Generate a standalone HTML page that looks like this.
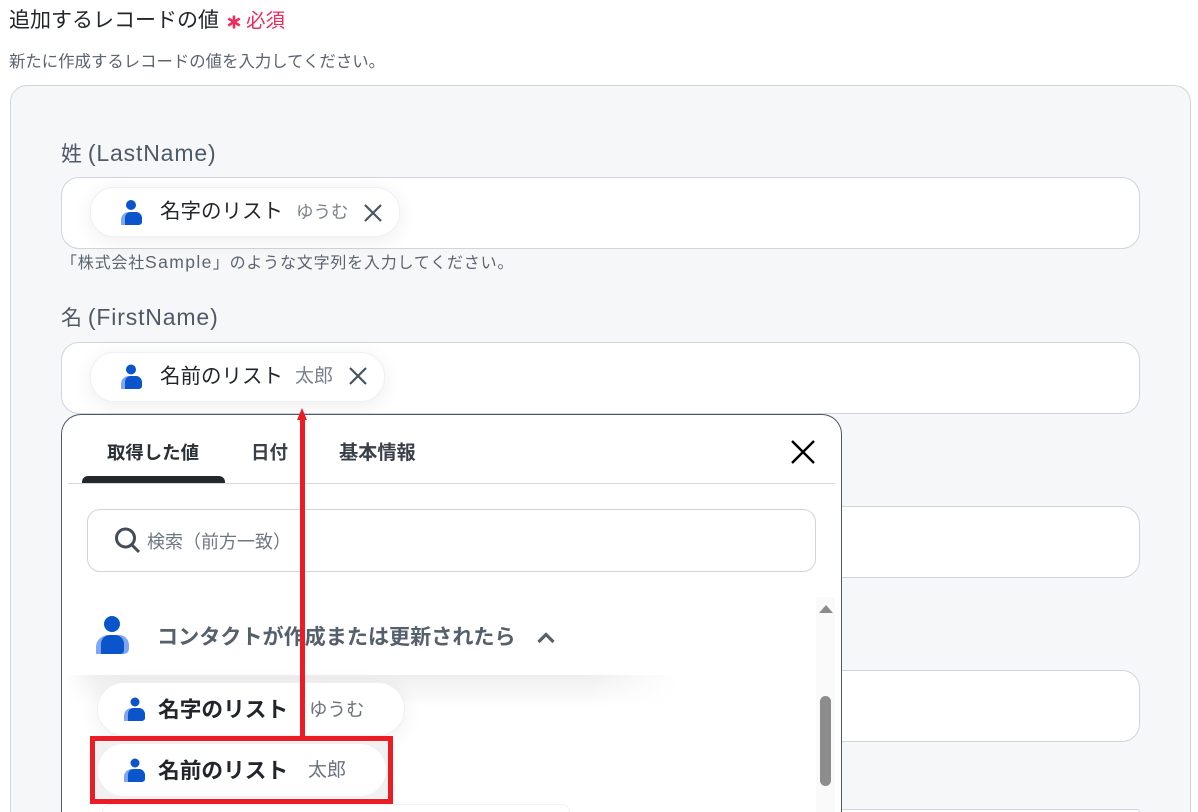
<!DOCTYPE html>
<html lang="ja"><head><meta charset="utf-8"><style>
*{box-sizing:border-box}
html,body{margin:0;padding:0;width:1198px;height:812px;overflow:hidden;background:#fff;font-family:"Liberation Sans","Noto Sans CJK JP",sans-serif}
#w{position:absolute;left:0;top:0;width:1198px;height:812px;overflow:hidden;background:#fff}
.a{position:absolute}
.t{position:absolute;white-space:nowrap;line-height:1}
.panel{left:10px;top:85px;width:1181px;height:727px;background:#f6f7f9;border:1px solid #cfd4df;border-bottom:0;border-radius:17px 17px 0 0}
.inp{left:61px;width:1079px;height:72px;background:#fff;border:1px solid #cfd4df;border-radius:18px}
.pill{position:absolute;background:#fff;border:1px solid #eef0f3;border-radius:24px;box-shadow:0 4px 20px rgba(0,0,0,.07)}
.ic{position:absolute}
.l{letter-spacing:.85px;font-size:23px}
</style></head><body><div id="w">
<div class="t" style="left:9px;top:10px;font-size:21px;color:#22262c">追加するレコードの値</div>
<svg class="ic" style="left:226px;top:14px" width="16" height="16" viewBox="0 0 16 16"><path d="M8 1.500V14.500M2.300 4.500L13.700 11.500M13.700 4.500L2.300 11.500" stroke="#ee2b5b" stroke-width="2.600" fill="none"/></svg>
<div class="t" style="left:246px;top:12px;font-size:19.500px;color:#ee2b5b">必須</div>
<div class="t" style="left:9px;top:54px;font-size:16.400px;color:#5b6470">新たに作成するレコードの値を入力してください。</div>
<div class="a panel"></div>

<div class="t" style="left:61px;top:142px;font-size:21px;color:#4f5a68"><span>姓</span> <span class="l">(LastName)</span></div>
<div class="a inp" style="top:177px"></div>
<div class="pill" style="left:90px;top:187px;width:310px;height:50px"></div>
<svg class="ic" style="left:118px;top:197px" width="28" height="30" viewBox="0 0 28 30"><circle cx="13" cy="8" r="5" fill="#0a55cc"/><path d="M3 28V23C3 18 7 15 11 15H18C22 15 24 18 24 22V24C24 27 22 28 20 28Z" fill="#7fa6f5"/><path d="M7 28V21C7 17 10 15 13 15H18C21 15 24 18 24 21V25C24 27 22 28 20 28Z" fill="#0a55cc"/></svg>
<div class="t" style="left:160px;top:202px;font-size:20.500px;color:#22262c">名字のリスト</div>
<div class="t" style="left:296px;top:204px;font-size:17.500px;color:#7b828c">ゆうむ</div>
<svg class="ic" style="left:362px;top:202px" width="22" height="22" viewBox="0 0 22 22"><path d="M3 3L19 19M19 3L3 19" stroke="#4a5462" stroke-width="2.200" fill="none"/></svg>
<div class="t" style="left:61px;top:254px;font-size:16px;color:#5b6470;letter-spacing:.8px">「株式会社<span style="letter-spacing:1.400px;font-size:17.500px">Sample</span>」のような文字列を入力してください。</div>

<div class="t" style="left:61px;top:306px;font-size:21px;color:#4f5a68"><span>名</span> <span class="l">(FirstName)</span></div>
<div class="a inp" style="top:342px"></div>
<div class="pill" style="left:90px;top:352px;width:295px;height:50px"></div>
<svg class="ic" style="left:118px;top:362px" width="28" height="30" viewBox="0 0 28 30"><circle cx="13" cy="7.500" r="5" fill="#0a55cc"/><g transform="translate(0,-1)"><path d="M3 28V23C3 18 7 15 11 15H18C22 15 24 18 24 22V24C24 27 22 28 20 28Z" fill="#7fa6f5"/><path d="M7 28V21C7 17 10 15 13 15H18C21 15 24 18 24 21V25C24 27 22 28 20 28Z" fill="#0a55cc"/></g></svg>
<div class="t" style="left:160px;top:367px;font-size:20.500px;color:#22262c">名前のリスト</div>
<div class="t" style="left:295px;top:367px;font-size:19px;color:#7b828c">太郎</div>
<svg class="ic" style="left:347px;top:365px" width="22" height="22" viewBox="0 0 22 22"><path d="M3 3L19 19M19 3L3 19" stroke="#4a5462" stroke-width="2.200" fill="none"/></svg>

<div class="a inp" style="top:506px"></div>
<div class="a inp" style="top:670px"></div>
<div class="a" style="left:61px;top:809px;width:1079px;height:3px;background:#fff;border:1px solid #cfd4df;border-bottom:0;border-radius:18px 18px 0 0"></div>

<div class="a" style="left:61px;top:414px;width:781px;height:398px;background:#fff;border:1px solid #4f5865;border-bottom:0;border-radius:20px 20px 0 0"></div>
<div class="t" style="left:107px;top:444px;font-size:18.400px;font-weight:700;color:#2b3037">取得した値</div>
<div class="t" style="left:251px;top:444px;font-size:18.500px;font-weight:700;color:#3a4049">日付</div>
<div class="t" style="left:339px;top:444px;font-size:19.200px;font-weight:700;color:#3a4049">基本情報</div>
<div class="a" style="left:82px;top:476px;width:143px;height:7px;background:#23272e;border-radius:6px 6px 0 0"></div>
<div class="a" style="left:68px;top:483px;width:767px;height:1px;background:#d5d9e0"></div>
<svg class="ic" style="left:789px;top:438px" width="28" height="28" viewBox="0 0 28 28"><path d="M3 3L25 25M25 3L3 25" stroke="#000" stroke-width="2.400" fill="none"/></svg>
<div class="a" style="left:87px;top:509px;width:729px;height:63px;border:1px solid #cfd4df;border-radius:13px;background:#fff"></div>
<svg class="ic" style="left:112px;top:525px" width="30" height="30" viewBox="0 0 30 30"><circle cx="13.500" cy="13" r="9" stroke="#444c57" stroke-width="3" fill="none"/><path d="M20 20L27 27" stroke="#444c57" stroke-width="3" fill="none"/></svg>
<div class="t" style="left:147px;top:533px;font-size:18px;color:#6f7783">検索（前方一致）</div>

<div class="a" style="left:816px;top:597px;width:19px;height:215px;background:#fafafa"></div>
<div class="a" style="left:819px;top:605px;width:0;height:0;border-left:7px solid transparent;border-right:7px solid transparent;border-bottom:8px solid #8c8c8c"></div>
<div class="a" style="left:820px;top:696px;width:11px;height:90px;background:#8c8c8c;border-radius:6px"></div>

<svg class="ic" style="left:92px;top:614px" width="40" height="44" viewBox="0 0 40 44"><circle cx="20" cy="10" r="8" fill="#0a55cc"/><path d="M4 40V33C4 26 10 21 17 21H27C33 21 37 26 37 31V34C37 38 35 40 31 40Z" fill="#7fa6f5"/><path d="M9 40V30C9 25 13 21 18 21H23C28 21 32 25 32 30V36C32 39 30 40 28 40Z" fill="#0a55cc"/></svg>
<div class="t" style="left:157px;top:627px;font-size:21.100px;font-weight:700;color:#56606d">コンタクトが作成または更新されたら</div>
<svg class="ic" style="left:534px;top:628px" width="24" height="18" viewBox="0 0 24 18"><path d="M4.500 14L12 6.500L19.500 14" stroke="#56606d" stroke-width="3.200" fill="none"/></svg>

<div class="a" style="left:66px;top:675px;width:610px;height:32px;background:linear-gradient(#eeeeee,rgba(255,255,255,0));-webkit-mask-image:linear-gradient(to right,transparent,#000 30px,#000 520px,transparent);mask-image:linear-gradient(to right,transparent,#000 30px,#000 520px,transparent)"></div>
<div class="pill" style="left:97px;top:682px;width:308px;height:54px;border-radius:27px"></div>
<svg class="ic" style="left:121px;top:694px" width="28" height="30" viewBox="0 0 28 30"><circle cx="14" cy="8" r="4.500" fill="#0a55cc"/><g transform="translate(0,-1)"><path d="M3 28V23C3 18 7 15 11 15H18C22 15 24 18 24 22V24C24 27 22 28 20 28Z" fill="#7fa6f5"/><path d="M7 28V21C7 17 10 15 13 15H18C21 15 24 18 24 21V25C24 27 22 28 20 28Z" fill="#0a55cc"/></g></svg>
<div class="t" style="left:158px;top:699px;font-size:21.700px;font-weight:700;color:#22262c">名字のリスト</div>
<div class="t" style="left:309px;top:701px;font-size:18.500px;color:#6b7380">ゆうむ</div>

<div class="a" style="left:96px;top:742px;width:292px;height:56px;background:#f1f1f1"></div>
<div class="pill" style="left:97px;top:743px;width:290px;height:54px;border-radius:27px;box-shadow:none"></div>
<svg class="ic" style="left:121px;top:755px" width="28" height="30" viewBox="0 0 28 30"><circle cx="14" cy="8" r="4.500" fill="#0a55cc"/><g transform="translate(0,-1)"><path d="M3 28V23C3 18 7 15 11 15H18C22 15 24 18 24 22V24C24 27 22 28 20 28Z" fill="#7fa6f5"/><path d="M7 28V21C7 17 10 15 13 15H18C21 15 24 18 24 21V25C24 27 22 28 20 28Z" fill="#0a55cc"/></g></svg>
<div class="t" style="left:158px;top:760px;font-size:21.700px;font-weight:700;color:#22262c">名前のリスト</div>
<div class="t" style="left:308px;top:761px;font-size:19px;color:#6b7380">太郎</div>
<div class="a" style="left:102px;top:804px;width:468px;height:8px;background:#fff;border:1px solid #eef0f3;border-bottom:0;border-radius:27px 27px 0 0"></div>

<div class="a" style="left:300px;top:418px;width:5px;height:320px;background:#ed1c24"></div>
<div class="a" style="left:297px;top:408px;width:0;height:0;border-left:5.500px solid transparent;border-right:5.500px solid transparent;border-bottom:12px solid #ed1c24"></div>
<div class="a" style="left:90px;top:736px;width:303px;height:68px;border:5px solid #ed1c24"></div>
</div></body></html>
